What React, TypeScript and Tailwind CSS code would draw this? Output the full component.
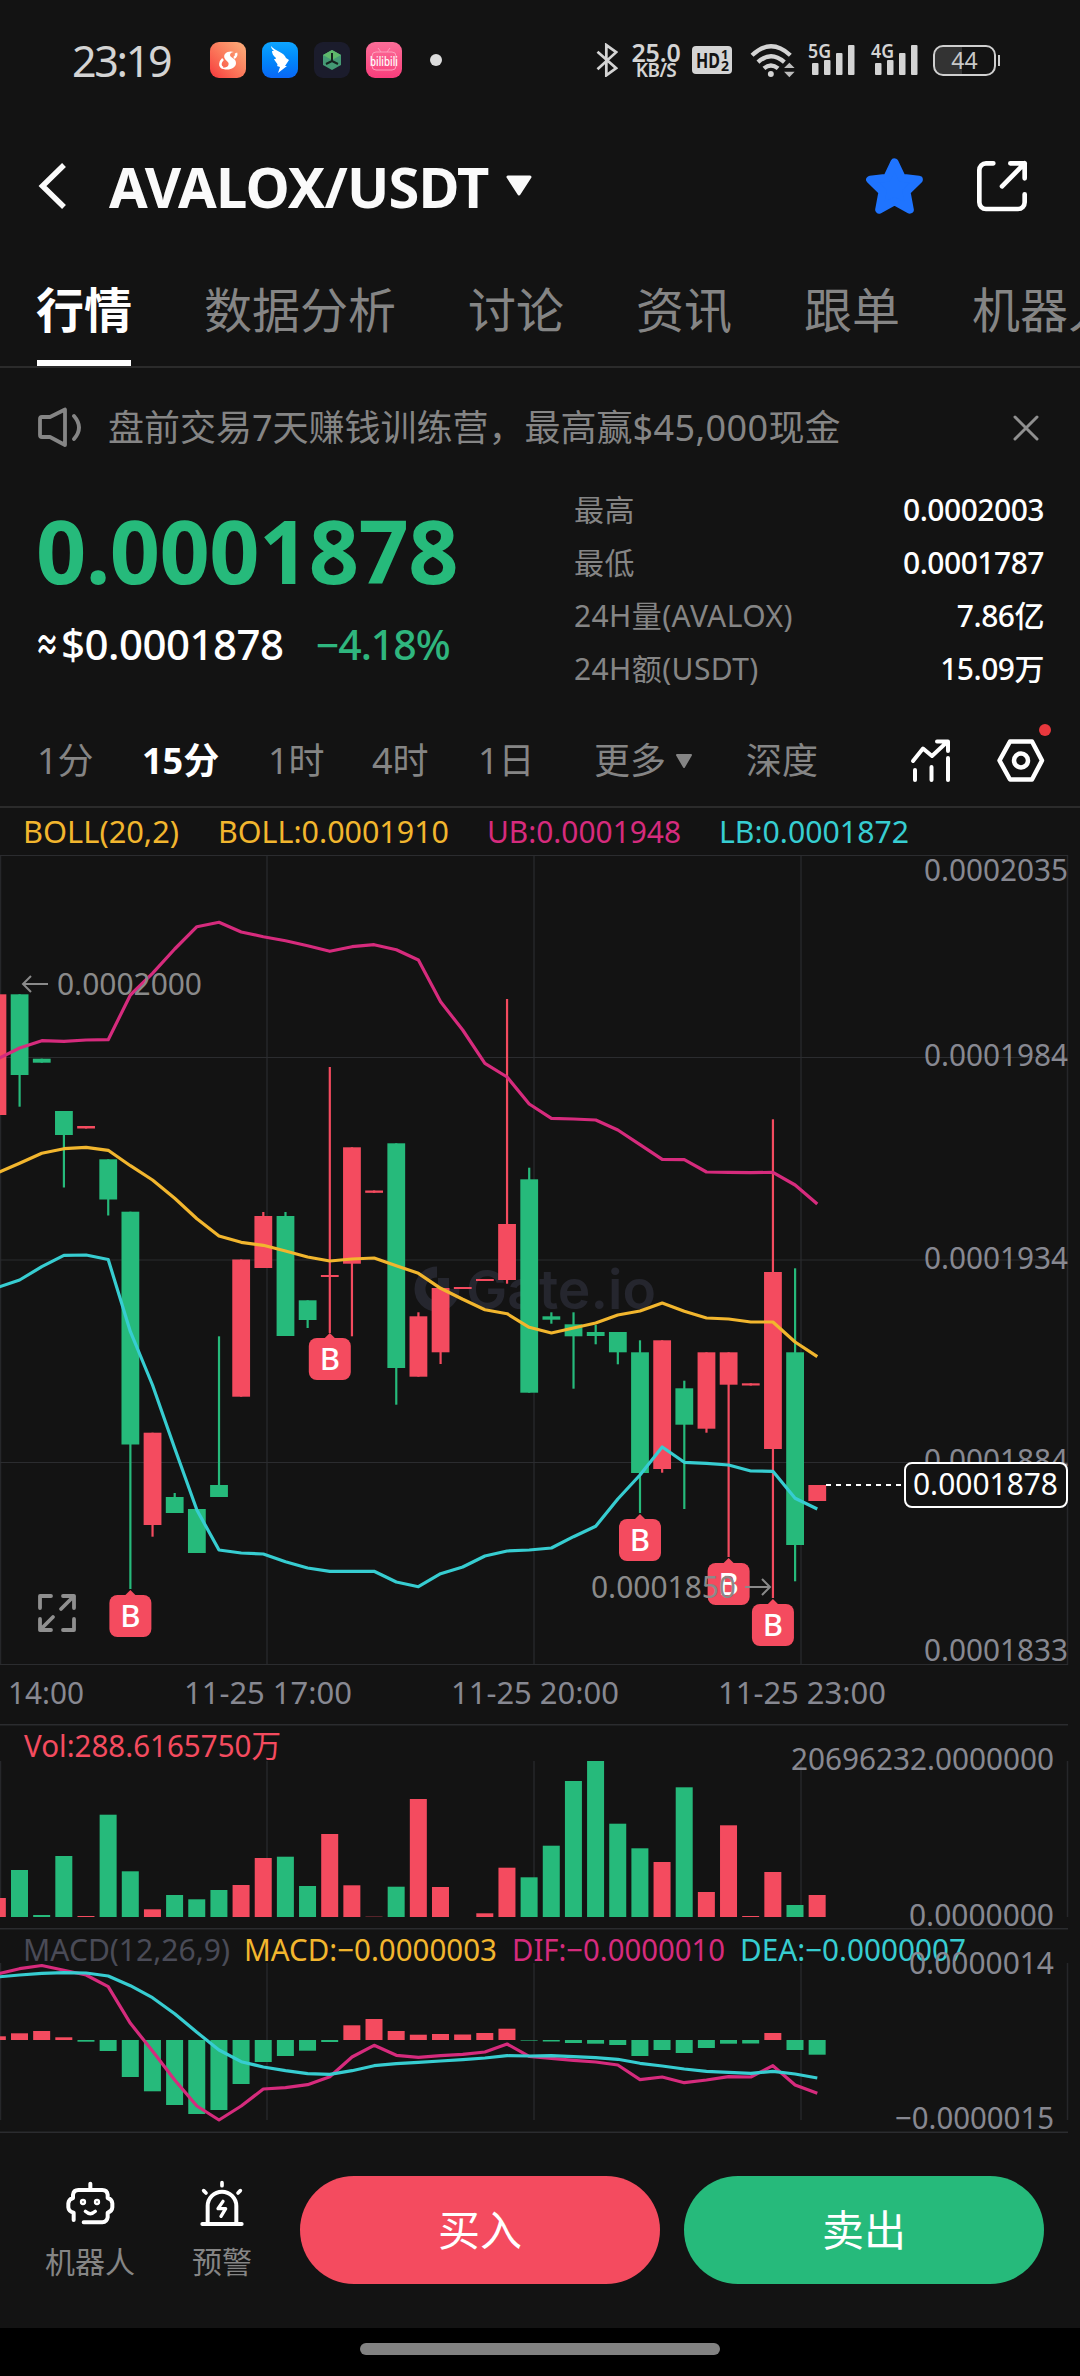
import { type ReactNode } from 'react'

const UP = '#f44b5f'
const DOWN = '#26ba7b'
const PINK = '#d62b7d'
const YELLOW = '#f2b62e'
const CYAN = '#37cdd1'
const AXIS = '#878891'
const GRID = '#26272a'

interface Candle {
  up?: boolean
  top: number
  bottom: number
  high?: number
  low?: number
  mark?: number
}

// The first candle is cut off by the left edge of the screen
const candles: Candle[] = [
  { up: true, top: 994.3, bottom: 1115 },
  { top: 994.3, bottom: 1075, low: 1106.7 },
  { top: 1058.7, bottom: 1062.7 },
  { top: 1111, bottom: 1135, low: 1187.5 },
  { up: true, top: 1126, bottom: 1128.5 },
  { top: 1159.3, bottom: 1199.5, low: 1215.5 },
  { top: 1211.7, bottom: 1444.5, low: 1589, mark: 1590 },
  { up: true, top: 1432.7, bottom: 1525, low: 1536.7 },
  { top: 1497, bottom: 1513, high: 1493 },
  { top: 1509, bottom: 1553 },
  { top: 1485, bottom: 1497, high: 1336.3 },
  { up: true, top: 1259.5, bottom: 1396.7 },
  { up: true, top: 1216, bottom: 1268, high: 1212 },
  { top: 1216, bottom: 1336, high: 1212 },
  { top: 1300.3, bottom: 1320, low: 1328 },
  { up: true, top: 1275, bottom: 1277, high: 1067, low: 1333, mark: 1333 },
  { up: true, top: 1147.3, bottom: 1263.7, low: 1336.3 },
  { up: true, top: 1190.5, bottom: 1192.8 },
  { top: 1143.3, bottom: 1368, low: 1404.7 },
  { up: true, top: 1316.3, bottom: 1376.7, high: 1312.3 },
  { up: true, top: 1288, bottom: 1352.3, low: 1364 },
  { up: true, top: 1287, bottom: 1289 },
  { up: true, top: 1279, bottom: 1281 },
  { up: true, top: 1224, bottom: 1280, high: 999, low: 1283.7 },
  { top: 1179.3, bottom: 1392.7, high: 1167.7 },
  { top: 1316.3, bottom: 1319.7, high: 1312.3, low: 1323.7 },
  { top: 1324.3, bottom: 1336.3, high: 1312.3, low: 1388.7 },
  { top: 1332, bottom: 1336, high: 1325, low: 1344.3 },
  { top: 1332, bottom: 1352.3, low: 1364.3 },
  { top: 1352.3, bottom: 1473, high: 1340.3, low: 1513, mark: 1514 },
  { up: true, top: 1340.3, bottom: 1469, low: 1472.7 },
  { top: 1388.3, bottom: 1424.7, high: 1380.7, low: 1509 },
  { up: true, top: 1352.3, bottom: 1428.7, low: 1432.7 },
  { up: true, top: 1352.3, bottom: 1384.7, low: 1557, mark: 1558 },
  { up: true, top: 1383.3, bottom: 1385.5 },
  { up: true, top: 1272, bottom: 1449, high: 1119.3, low: 1598, mark: 1599 },
  { top: 1352.3, bottom: 1545, high: 1268.3, low: 1581.3 },
  { up: true, top: 1485, bottom: 1501 },
]

const upperBand = [
  1059, 1048, 1040.7, 1041.3, 1040, 1039.7, 995, 973.3, 949, 926.7, 922.3, 932, 936.7, 940.7, 945.7, 951.3, 946.7, 944.7, 949.7,
  960, 1001.7, 1030, 1063.3, 1077, 1104, 1118.3, 1119, 1120, 1130, 1144.7, 1159.3, 1159.7, 1172, 1172.3, 1172.7, 1172.3, 1185, 1204,
]
const middleBand = [
  1173, 1163.3, 1153.3, 1148.7, 1147.3, 1150.3, 1165.7, 1180, 1198.3, 1218.7, 1236, 1242.3, 1245.3, 1251, 1257, 1261, 1259, 1258,
  1265.7, 1273.3, 1288.3, 1299.3, 1309.7, 1313.7, 1327.3, 1333, 1328, 1323, 1315, 1311, 1303, 1311.3, 1318, 1319, 1322, 1322, 1342,
  1356.7,
]
const lowerBand = [
  1287.5, 1280, 1266.7, 1255.3, 1255, 1259.5, 1331.7, 1385, 1448.3, 1510, 1550, 1553, 1554, 1561.7, 1568, 1571.3, 1571.3, 1571.3,
  1582, 1586.7, 1573.7, 1567, 1556, 1551, 1550, 1548, 1536.7, 1526.3, 1499, 1475, 1447, 1462.3, 1463.3, 1465, 1471, 1471.3, 1498.3,
  1509,
]

const volumes = [
  19, 47, 2, 61, 1, 102.3, 45.7, 7.7, 22, 17.7, 27, 32, 59, 60.3, 31, 83, 31.7, 0.3, 30.3, 118, 30, 0, 3.7, 49.3, 39.7, 71.3, 136,
  156, 93.3, 68.7, 55, 129.7, 25, 91.7, 1, 45, 12, 22,
]

const histogram = [
  3.7, 6.7, 9, 2.7, -1.7, -11, -37, -51.3, -65, -74, -70, -44, -22, -16, -10.7, -2, 14.7, 21, 9, 5.3, 6, 5.5, 7, 11.3, -0.6, -1.5,
  -3, -3.7, -5, -16, -10, -13, -8, -3.7, -3.5, 7, -10, -14.7,
]
const dif = [
  1974, 1968.7, 1965.5, 1970.3, 1975, 1986.7, 2023.3, 2051, 2080, 2106, 2120, 2106, 2089, 2087.7, 2084.7, 2076.7, 2057, 2045.3,
  2055.3, 2057.3, 2055.7, 2054.3, 2052, 2044, 2056.3, 2058.3, 2060.3, 2062, 2065, 2079.7, 2077, 2082.7, 2080, 2076.7, 2077, 2065.7,
  2085, 2093.3,
]
const dea = [
  1977, 1975, 1973.3, 1972.7, 1973, 1976, 1985.7, 1997.7, 2013.7, 2032.3, 2050, 2061.7, 2067, 2070.7, 2073.7, 2074.3, 2070.7, 2065.7,
  2063.7, 2062.3, 2061, 2059.7, 2058, 2055.7, 2056, 2055.7, 2056.7, 2057.7, 2059.3, 2063.3, 2066, 2069, 2071.3, 2072.3, 2073.3,
  2071.3, 2074, 2078,
]

const xAt = (i: number) => 19.6 + (i - 1) * 22.157
const toPoints = (ys: number[]) => ys.map((y, i) => `${xAt(i).toFixed(1)},${y}`).join(' ')

const gridX = [0.5, 267, 534, 801, 1067.5]

function Line({ ys, color }: { ys: number[]; color: string }) {
  return <polyline points={toPoints(ys)} fill="none" stroke={color} strokeWidth={3.2} strokeLinejoin="round" />
}

function VerticalGrid({ from, to }: { from: number; to: number }) {
  return (
    <>
      {gridX.map((x) => (
        <line key={x} x1={x} x2={x} y1={from} y2={to} stroke={GRID} strokeWidth={1.5} />
      ))}
    </>
  )
}

function Label({ x, y, w, color = AXIS, children }: { x: number; y: number; w: number; color?: string; children: string }) {
  return (
    <text x={x} y={y} textLength={w} lengthAdjust="spacingAndGlyphs" fill={color} fontSize={31}>
      {children}
    </text>
  )
}

function BuyMark({ x, y }: { x: number; y: number }) {
  return (
    <g>
      <path d={`M${x - 6} ${y + 6} L${x} ${y} L${x + 6} ${y + 6}Z`} fill={UP} />
      <rect x={x - 21} y={y + 5} width={42} height={42} rx={8} fill={UP} />
      <text x={x} y={y + 37} textAnchor="middle" fontSize={31} fontWeight={500} fill="#fff">
        B
      </text>
    </g>
  )
}

function PriceChart() {
  return (
    <svg className="block w-full h-[916px]" viewBox="0 808 1080 916">
      <Label x={23} y={843} w={156} color={YELLOW}>BOLL(20,2)</Label>
      <Label x={218} y={843} w={231} color={YELLOW}>BOLL:0.0001910</Label>
      <Label x={487} y={843} w={194} color={PINK}>UB:0.0001948</Label>
      <Label x={719} y={843} w={190} color={CYAN}>LB:0.0001872</Label>

      <VerticalGrid from={855} to={1665} />
      {[855.5, 1057.5, 1260, 1462.5, 1664.5].map((y) => (
        <line key={y} x1={0} x2={1068} y1={y} y2={y} stroke="#2b2c2f" strokeWidth={1.2} />
      ))}

      {/* watermark */}
      <path d="M437 1272 A17 17 0 1 0 454 1289" fill="none" stroke="#25262e" strokeWidth={11} />
      <rect x={438} y={1278} width={11} height={11} fill="#25262e" />
      <text x={466} y={1309} textLength={190} lengthAdjust="spacingAndGlyphs" fontSize={54} fontWeight={600} fontFamily="Inter" fill="#25262e">
        Gate.io
      </text>

      {candles.map((c, i) => {
        const x = xAt(i)
        const color = c.up ? UP : DOWN
        return (
          <g key={i} fill={color}>
            <rect x={x - 1.1} y={c.high ?? c.top} width={2.2} height={(c.low ?? c.bottom) - (c.high ?? c.top)} />
            <rect x={x - 8.9} y={c.top} width={17.8} height={c.bottom - c.top} />
          </g>
        )
      })}

      <Line ys={upperBand} color={PINK} />
      <Line ys={middleBand} color={YELLOW} />
      <Line ys={lowerBand} color={CYAN} />

      {candles.map((c, i) => c.mark && <BuyMark key={i} x={xAt(i)} y={c.mark} />)}

      <path d="M48 984 H23 M31 976 L23 984 L31 992" fill="none" stroke="#8a8a8a" strokeWidth={2} />
      <Label x={57} y={995} w={145} color="#8a8a8a">0.0002000</Label>
      <Label x={591} y={1598} w={145} color="#8a8a8a">0.0001850</Label>
      <path d="M745 1587 H770 M762 1579 L770 1587 L762 1595" fill="none" stroke="#8a8a8a" strokeWidth={2} />

      <g fill="none" stroke="#8f8f8f" strokeWidth={3.8} strokeLinecap="round" strokeLinejoin="round">
        <path d="M40 1608 V1596 H51" />
        <path d="M63 1596 H74 V1608 M74 1596 L61 1609" />
        <path d="M74 1619 V1630 H63" />
        <path d="M40 1619 V1630 H51 M40 1630 L53 1617" />
      </g>

      <Label x={924} y={881} w={144}>0.0002035</Label>
      <Label x={924} y={1066} w={144}>0.0001984</Label>
      <Label x={924} y={1269} w={144}>0.0001934</Label>
      <Label x={924} y={1471} w={144}>0.0001884</Label>
      <Label x={924} y={1661} w={144}>0.0001833</Label>

      <line x1={826} x2={902} y1={1485} y2={1485} stroke="#fff" strokeWidth={2} strokeDasharray="5 5" />
      <rect x={905} y={1463} width={162} height={44} rx={7} fill="#131313" stroke="#fff" strokeWidth={2} />
      <Label x={913} y={1495} w={145} color="#fff">0.0001878</Label>

      <Label x={8} y={1704} w={76}>14:00</Label>
      <Label x={184} y={1704} w={168}>11-25 17:00</Label>
      <Label x={451} y={1704} w={168}>11-25 20:00</Label>
      <Label x={718} y={1704} w={168}>11-25 23:00</Label>
    </svg>
  )
}

function VolumeChart() {
  return (
    <svg className="block w-full h-[204px] overflow-visible" viewBox="0 1724 1080 204">
      <line x1={0} x2={1068} y1={1724.8} y2={1724.8} stroke="#2b2c2f" strokeWidth={1.5} />
      <VerticalGrid from={1761} to={1917} />
      {volumes.map((v, i) => (
        <rect key={i} x={xAt(i) - 8.6} y={1917 - v} width={17} height={v} fill={candles[i].up ? UP : DOWN} />
      ))}
      <Label x={24} y={1757} w={257} color={UP}>Vol:288.6165750万</Label>
      <Label x={791} y={1770} w={263}>20696232.0000000</Label>
      <Label x={909} y={1926} w={145}>0.0000000</Label>
    </svg>
  )
}

function MacdChart() {
  return (
    <svg className="block w-full h-[205px] overflow-visible" viewBox="0 1928 1080 205">
      <line x1={0} x2={1068} y1={1928.7} y2={1928.7} stroke="#2b2c2f" strokeWidth={1.5} />
      <VerticalGrid from={1963} to={2120} />
      {histogram.map((v, i) => (
        <rect key={i} x={xAt(i) - 8.6} y={v > 0 ? 2040 - v : 2040} width={17} height={Math.abs(v)} fill={v > 0 ? UP : DOWN} />
      ))}
      <Line ys={dif} color={PINK} />
      <Line ys={dea} color={CYAN} />
      <Label x={23} y={1961} w={207} color="#4a4b57">MACD(12,26,9)</Label>
      <Label x={244} y={1961} w={253} color={YELLOW}>MACD:−0.0000003</Label>
      <Label x={512} y={1961} w={213} color={PINK}>DIF:−0.0000010</Label>
      <Label x={740} y={1961} w={226} color={CYAN}>DEA:−0.0000007</Label>
      <Label x={909} y={1974} w={145}>0.0000014</Label>
      <Label x={895} y={2129} w={159}>−0.0000015</Label>
      <line x1={0} x2={1068} y1={2132.3} y2={2132.3} stroke="#2b2c2f" strokeWidth={1.5} />
    </svg>
  )
}

function Signal({ kind }: { kind: string }) {
  return (
    <svg className="w-[48px] h-[34px] overflow-visible" viewBox="0 0 48 34" fill="#d4d4d4">
      <text x={0} y={15} fontSize={20} fontWeight={600} textLength={23} lengthAdjust="spacingAndGlyphs">
        {kind}
      </text>
      <rect x={4} y={20} width={6.5} height={12} rx={1} />
      <rect x={16} y={17} width={6.5} height={15} rx={1} />
      <rect x={28} y={10} width={6.5} height={22} rx={1} />
      <rect x={40} y={2} width={6.5} height={30} rx={1} />
    </svg>
  )
}

function StatusBar() {
  return (
    <div className="h-[120px] flex items-center pl-[72px] pr-[80px] text-[#d4d4d4]">
      <span className="w-[138px] text-[43px] leading-none tracking-[-2.3px]">23:19</span>
      <div className="flex gap-4">
        <svg className="size-9 rounded-[9px] bg-linear-to-tr from-[#f5313c] to-[#fbb07c]" viewBox="0 0 36 36">
          <path d="M24 10 C18 8 12 12 15 17 C17 20 20 20 18 24 C16 26 12 26 10 25 C16 30 26 27 26 21 C26 16 20 16 20 13 C20 11 22 10 24 10Z" fill="#fff" />
          <path d="M13 17 C10 20 9 24 13 26 M26 11 Q27 14 24 16" fill="none" stroke="#fff" strokeWidth={2.5} />
        </svg>
        <svg className="size-9 rounded-[9px] bg-linear-to-b from-[#0fa5ff] to-[#0b66f5]" viewBox="0 0 36 36">
          <path d="M9 4 C13 9 22 10 24 16 L27 18 L23 24 L25 24 L16 31 L18 25 L15 24 C17 22 13 20 12 17 C13 17 14 17 14 16 C11 14 10 11 10 9 L12 9 C10 7 9 6 9 4Z" fill="#fff" />
        </svg>
        <svg className="size-9 rounded-[9px] bg-[#1b1c2c]" viewBox="0 0 36 36">
          <path d="M18 8 L27 13 V23 L18 28 L9 23 V13Z" fill="#449a74" />
          <path d="M18 8 L27 13 L18 18 L9 13Z" fill="#5fb96b" />
          <path d="M18 11 V19 M18 19 L12 22 M18 19 L24 22" stroke="#16231f" strokeWidth={2} fill="none" />
        </svg>
        <svg className="size-9 rounded-[9px] bg-linear-to-b from-[#fb6d98] to-[#f93c7c]" viewBox="0 0 36 36">
          <rect x={6} y={10} width={24} height={18} rx={4} fill="none" stroke="#fda0bd" strokeWidth={1} />
          <path d="M12 6 L15 10 M24 6 L21 10" stroke="#fda0bd" strokeWidth={1} />
          <text x={4} y={24} fontSize={13} fontWeight={500} textLength={28} lengthAdjust="spacingAndGlyphs" fill="#fff">
            bilibili
          </text>
        </svg>
      </div>
      <span className="ml-[28px] size-3 rounded-full bg-[#dcdcdc]" />
      <div className="ml-auto flex items-center">
        <svg className="w-[22px] h-[34px]" viewBox="44 66 64 100" fill="none" stroke="#d4d4d4" strokeWidth={8}>
          <path d="M48 92 L103 140 L74 161 V72 L103 93 L48 143" />
        </svg>
        <div className="ml-[12px] w-[52px] flex flex-col items-center font-semibold">
          <span className="text-[25px] leading-[20px] tracking-[-0.2px]">25.0</span>
          <span className="text-[19px] leading-[17px] tracking-[-0.6px]">KB/S</span>
        </div>
        <svg className="ml-[10px] w-[40px] h-[28px] overflow-visible" viewBox="0 0 40 28">
          <rect width={40} height={28} rx={4} fill="#d4d4d4" />
          <text x={4} y={22} fontSize={22} fontWeight={700} textLength={24} lengthAdjust="spacingAndGlyphs" fill="#131313">HD</text>
          <text x={29} y={13} fontSize={13} fontWeight={700} fill="#131313">1</text>
          <text x={29} y={25} fontSize={14} fontWeight={700} fill="#131313">2</text>
        </svg>
        <svg className="ml-[18px] w-[45px] h-[35px]" viewBox="505 62 136 106" fill="none" stroke="#d4d4d4" strokeWidth={13}>
          <path d="M511 99 Q568 45 627 99" />
          <path d="M529 120 Q568 84 609 120" />
          <path d="M547 139 Q568 121 590 139" />
          <circle cx={568} cy={156} r={9} fill="#d4d4d4" stroke="none" />
          <path d="M608 138 H640 L624 122Z M608 149 H640 L624 166Z" fill="#bdbdbd" stroke="none" />
        </svg>
        <div className="ml-[13px] flex gap-[15px]">
          <Signal kind="5G" />
          <Signal kind="4G" />
        </div>
        <div className="ml-[14px] w-[63px] h-[31px] rounded-[10px] border-2 border-[#cfcfcf] bg-linear-to-r from-[#333] from-45% to-transparent to-45% flex items-center justify-center text-[23px] leading-none text-[#c8c8c8]">
          44
        </div>
        <div className="ml-[2px] w-[2px] h-[11px] bg-[#cfcfcf]" />
      </div>
    </div>
  )
}

function Header() {
  return (
    <div className="h-[132px] flex items-center pl-[38px] pr-[52px]">
      <svg className="w-[30px] h-[48px]" viewBox="0 0 30 48" fill="none" stroke="#fafafa" strokeWidth={5.5}>
        <path d="M26 3 L4.5 24 L26 45" />
      </svg>
      <h1 className="ml-[41px] w-[384px] whitespace-nowrap text-[56px] leading-none font-bold tracking-[-0.8px] text-[#fafafa]">AVALOX/USDT</h1>
      <svg className="ml-[12px] w-[28px] h-[22px]" viewBox="0 0 28 22">
        <path d="M3 2 H25 L14 19Z" fill="#fafafa" stroke="#fafafa" strokeWidth={3} strokeLinejoin="round" />
      </svg>
      <svg className="ml-auto w-[57px] h-[56px]" viewBox="857 409 170 168" fill="#1f74ff" stroke="#1f74ff" strokeWidth={24} strokeLinejoin="round">
        <path d="M942 422 L964 468 L1015 474 L978 510 L988 564 L942 539 L896 564 L906 510 L869 474 L920 468Z" />
      </svg>
      <svg className="ml-[53px] w-[52px] h-[52px]" viewBox="1188 418 156 156" fill="none" stroke="#fff" strokeWidth={14} strokeLinecap="round" strokeLinejoin="round">
        <path d="M1240 428 H1218 A20 20 0 0 0 1198 448 V545 A20 20 0 0 0 1218 565 H1314 A20 20 0 0 0 1334 545 V521" />
        <path d="M1291 428 H1334 V473 M1334 428 L1266 497" />
      </svg>
    </div>
  )
}

const tabs = ['行情', '数据分析', '讨论', '资讯', '跟单', '机器人']

function Tabs() {
  return (
    <nav className="h-[116px] flex gap-[72px] pl-[36px] overflow-hidden border-b-2 border-[#2b2b2b] text-[48px] leading-none whitespace-nowrap text-[#858585]">
      {tabs.map((tab, i) => (
        <div key={tab} className={i === 0 ? 'flex flex-col justify-between text-white font-bold' : 'shrink-0'}>
          <span className="block pt-[34px]">{tab}</span>
          {i === 0 && <span className="mx-px h-[6px] bg-white" />}
        </div>
      ))}
    </nav>
  )
}

function Notice() {
  return (
    <div className="h-[116px] pt-1 flex items-center pl-[36px] pr-[40px] text-[#858585]">
      <svg className="w-[48px] h-[44px]" viewBox="36 406 48 44" fill="none" stroke="#858585" strokeWidth={3.8} strokeLinejoin="round" strokeLinecap="round">
        <path d="M42 417 H50 L65 409.500 V445 L50 437 H42 Q40 437 40 435 V419 Q40 417 42 417Z" />
        <path d="M74 416 Q84 427.500 74 439" />
      </svg>
      <p className="ml-[24px] text-[36px] leading-none whitespace-nowrap">
        盘前交易7天赚钱训练营，最高赢<span className="tracking-[0.4px]">$45,000</span>现金
      </p>
      <svg className="ml-auto w-[28px] h-[28px]" viewBox="0 0 28 28" stroke="#8f8f8f" strokeWidth={3} strokeLinecap="round">
        <path d="M3 3 L25 25 M25 3 L3 25" />
      </svg>
    </div>
  )
}

const stats = [
  { name: '最高', value: '0.0002003' },
  { name: '最低', value: '0.0001787' },
  { name: '24H量(AVALOX)', value: '7.86亿' },
  { name: '24H额(USDT)', value: '15.09万' },
]

function Summary() {
  return (
    <div className="h-[212px] flex justify-between pl-[36px] pr-[36px]">
      <div className="pt-[22px] whitespace-nowrap">
        <div className="text-[88px] leading-none font-bold tracking-[-0.6px] text-[#26ba7b]">0.0001878</div>
        <div className="mt-[29px] flex items-center gap-[32px] text-[42px] leading-none">
          <span className="flex items-center font-medium text-white tracking-[-0.5px]">
            <span className="-ml-px mr-[2px] w-[24px] text-[40px]">
              <span className="inline-block origin-left scale-x-[0.6] font-bold">≈</span>
            </span>
            $0.0001878
          </span>
          <span className="text-[#2fb67e] text-[41px] font-medium tracking-[-1px]">−4.18%</span>
        </div>
      </div>
      <dl className="w-[470px] text-[30px] leading-none -mt-px">
        {stats.map((s) => (
          <div key={s.name} className="h-[53px] flex items-center justify-between">
            <dt className="text-[#858585] tracking-[0.4px]">{s.name}</dt>
            <dd className="font-medium text-white tracking-[-0.5px]">{s.value}</dd>
          </div>
        ))}
      </dl>
    </div>
  )
}

function Period({ width, active, children }: { width: string; active?: boolean; children: ReactNode }) {
  return <span className={`${width} shrink-0 flex items-center ${active ? 'text-white font-bold' : ''}`}>{children}</span>
}

function Toolbar() {
  return (
    <div className="h-[112px] pt-[20px] flex items-center pl-[37px] pr-[34px] border-b-2 border-[#2b2b2b] text-[36px] leading-none text-[#858585]">
      <Period width="w-[105px]">1分</Period>
      <Period width="w-[126px]" active>15分</Period>
      <Period width="w-[104px]">1时</Period>
      <Period width="w-[106px]">4时</Period>
      <Period width="w-[116px]">1日</Period>
      <Period width="w-[152px]">
        更多
        <svg className="ml-[8px] w-[20px] h-[18px]" viewBox="0 0 20 18">
          <path d="M3 3 H17 L10 15Z" fill="#858585" stroke="#858585" strokeWidth={2} strokeLinejoin="round" />
        </svg>
      </Period>
      <Period width="w-[74px]">深度</Period>
      <svg className="ml-auto w-[44px] h-[48px]" viewBox="908 737 44 48" fill="none" stroke="#fff" strokeWidth={4} strokeLinecap="round" strokeLinejoin="round">
        <path d="M914 770 V780 M930.500 767 V780 M947 758 V780" />
        <path d="M912 761 L922 748.500 L931 756 L946 742 M936 741.500 H947 V751" />
      </svg>
      <div className="relative ml-[43px] w-[50px] h-[48px]">
        <svg className="w-[50px] h-[48px]" viewBox="995 737 50 48" fill="none" stroke="#fff" strokeWidth={4.5} strokeLinejoin="round">
          <path d="M1009 741.500 H1031 L1041 760.500 L1031 779.500 H1009 L998.500 760.500Z" />
          <circle cx={1020} cy={760.5} r={7} />
        </svg>
        <span className="absolute -top-[13px] right-[-5px] size-3 rounded-full bg-[#e8383d]" />
      </div>
    </div>
  )
}

function ActionBar() {
  return (
    <div className="h-[195px] pt-[43px] flex pl-[30px] pr-[36px] text-white">
      <div className="w-[120px] pt-[4px] flex flex-col items-center">
        <svg className="w-[50px] h-[48px]" viewBox="134 62 150 144" fill="none" stroke="#fff" strokeWidth={12} strokeLinecap="round" strokeLinejoin="round">
          <path d="M210 73 V92" />
          <path d="M160 182 V160 Q145 156 144 144 V132 Q145 120 158 116 V106 Q160 92 174 92 H246 Q260 92 262 106 V116 Q275 120 276 132 V144 Q275 156 262 160 V174 Q260 188 246 189 H190" />
          <path d="M195 156 Q210 170 225 156" strokeWidth={10} />
          <circle cx={188} cy={128} r={3.5} />
          <circle cx={230} cy={128} r={3.5} />
        </svg>
        <span className="mt-[19px] text-[30px] leading-none text-[#858585]">机器人</span>
      </div>
      <div className="ml-[22px] w-[100px] pt-[4px] flex flex-col items-center">
        <svg className="w-[48px] h-[48px]" viewBox="534 60 144 144" fill="none" stroke="#fff" strokeWidth={12} strokeLinecap="round" strokeLinejoin="round">
          <path d="M563 190 V138 A43 43 0 0 1 649 138 V190 M547 192 H665" />
          <path d="M606 68 V77 M551 92 L558 99 M661 92 L654 99" strokeWidth={11} />
          <path d="M609 124 L594 146 H617 L603 169" strokeWidth={10} />
        </svg>
        <span className="mt-[19px] text-[30px] leading-none text-[#858585]">预警</span>
      </div>
      <button className="ml-[28px] w-[360px] h-[108px] rounded-full bg-[#f44b5f] text-[42px] leading-none">买入</button>
      <button className="ml-[24px] w-[360px] h-[108px] rounded-full bg-[#26ba7b] text-[42px] leading-none">卖出</button>
    </div>
  )
}

export default function App() {
  return (
    <div className="w-[1080px] h-[2376px] overflow-hidden bg-[#131313] font-['Noto_Sans','Noto_Sans_CJK_SC',sans-serif]">
      <StatusBar />
      <Header />
      <Tabs />
      <Notice />
      <Summary />
      <Toolbar />
      <PriceChart />
      <VolumeChart />
      <MacdChart />
      <ActionBar />
      <div className="h-[48px] pt-[15px] bg-black flex justify-center">
        <div className="w-[360px] h-3 rounded-full bg-[#828282]" />
      </div>
    </div>
  )
}
